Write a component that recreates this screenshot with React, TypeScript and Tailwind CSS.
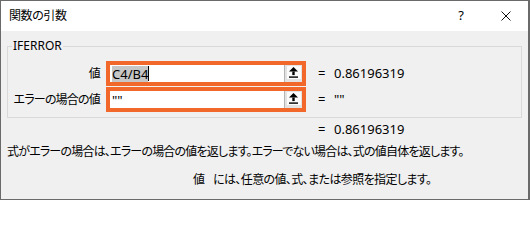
import React from "react";

const font = { fontFamily: '"Noto Sans", "Noto Sans CJK JP", sans-serif', fontFeatureSettings: '"palt"' };

const RefButton = () => (
  <div className="flex h-full w-[18px] shrink-0 flex-col items-center border-l border-[#b4b4b4] bg-[#e3e3e3] pt-[1px]">
    <div className="flex h-[13px] w-[14px] items-center justify-center bg-[#fbfbfb]">
      <svg width="9" height="11" viewBox="0 0 9 11">
        <polygon points="4.5,0 0,4.6 9,4.6" fill="#000" />
        <rect x="3.3" y="4.5" width="2.4" height="3.6" fill="#000" />
        <rect x="0" y="9.4" width="9" height="1.4" fill="#000" />
      </svg>
    </div>
  </div>
);

const ArgRow = ({ label, value, result, selected }: { label: string; value: string; result: string; selected?: boolean }) => (
  <div className="flex h-[25px] items-center">
    <div className="w-[93px] whitespace-nowrap pr-[1px] text-right text-[12px] tracking-[-0.8px] text-black">{label}</div>
    <div className="ml-[5px] flex h-[25px] w-[200px] border-[4px] border-[#f2682a] bg-white">
      <div className="flex flex-1 items-center pl-[2px] text-[13px] leading-[16px] text-black">
        {selected ? (
          <>
            <span className="bg-[#c6c6c6]">{value}</span>
            <span className="h-[15px] w-[1px] bg-black" />
          </>
        ) : (
          <span>{value}</span>
        )}
      </div>
      <RefButton />
    </div>
    <div className="ml-[12px] w-[16px] text-[13px] text-black">=</div>
    <div className="text-[13px] text-black">{result}</div>
  </div>
);

export default function App() {
  return (
    <div className="flex h-[200px] w-[530px] flex-col border border-r-2 border-[#6a6a6a] bg-[#f0f0f0]" style={font}>
      <div className="flex h-[30px] shrink-0 items-center bg-white pl-2 text-[12px] text-black">
        <span className="tracking-[-0.4px]">関数の引数</span>
        <div className="ml-auto mr-[17px] flex items-center">
          <span className="text-[13px]">?</span>
          <svg className="ml-[37px]" width="10" height="10" viewBox="0 0 10 10">
            <path d="M0.5 0.5 L9.5 9.5 M9.5 0.5 L0.5 9.5" stroke="#111" strokeWidth="1" />
          </svg>
        </div>
      </div>

      <div className="flex-1 px-[6px] pt-[15px]">
        <div className="relative h-[72px] w-[515px] border border-[#d9d9d9] pt-[14px]">
          <span className="absolute -top-[10px] left-[4px] bg-[#f0f0f0] px-[1px] text-[12px] leading-[18px] text-black">IFERROR</span>
          <div className="flex flex-col gap-[1px]">
            <ArgRow label="値" value="C4/B4" result="0.86196319" selected />
            <ArgRow label="エラーの場合の値" value={'""'} result={'""'} />
          </div>
        </div>

        <div className="mt-[4px] flex h-[16px] items-center text-[13px] text-black">
          <div className="w-[311px]" />
          <div className="w-[16px]">=</div>
          <div>0.86196319</div>
        </div>

        <p className="mt-[6px] h-[16px] whitespace-nowrap text-[12px] leading-[16px] tracking-[-0.8px] text-black">
          式がエラーの場合は、エラーの場合の値を返します。エラーでない場合は、式の値自体を返します。
        </p>

        <p className="mt-[12px] flex h-[16px] whitespace-nowrap pl-[186px] text-[12px] leading-[16px] tracking-[-0.6px] text-black">
          <span className="w-[20px]">値</span>
          <span>には、任意の値、式、または参照を指定します。</span>
        </p>
      </div>
    </div>
  );
}
